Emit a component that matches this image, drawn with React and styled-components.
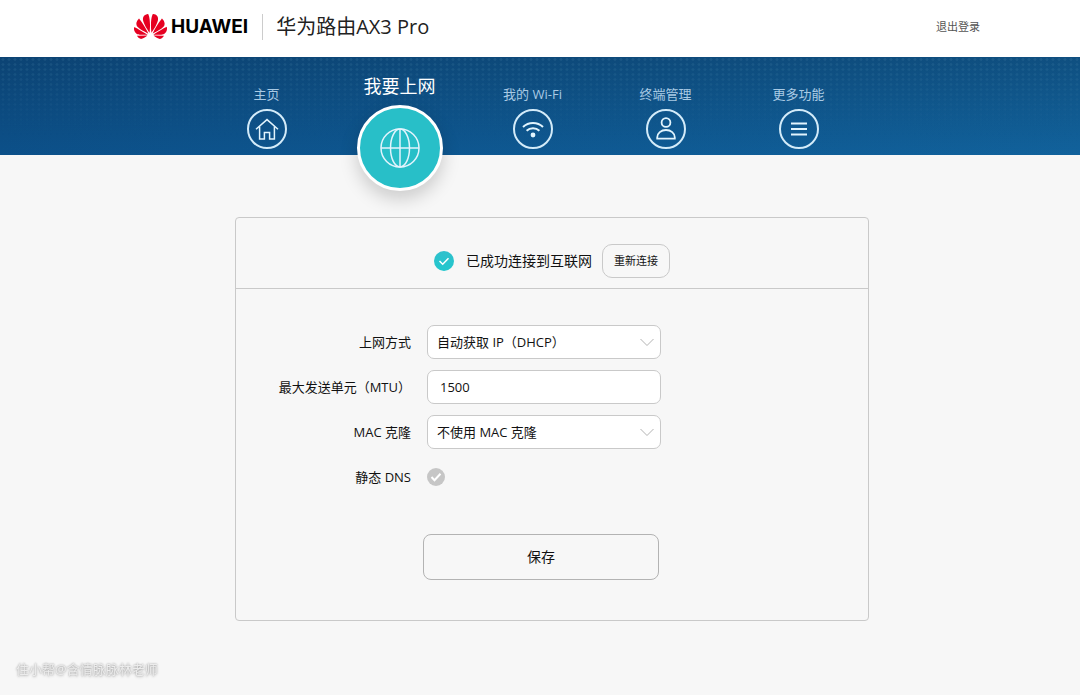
import React, { useState } from 'react';
import styled, { createGlobalStyle, css } from 'styled-components';
import { SiHuawei } from 'react-icons/si';

const GlobalStyle = createGlobalStyle`
  * {
    box-sizing: border-box;
  }

  body {
    margin: 0;
    background: #f7f7f7;
    color: #111;
    font-family: "Open Sans", "Noto Sans CJK SC", sans-serif;
    font-size: 13px;
    line-height: 20px;
  }

  button,
  input,
  select {
    font: inherit;
    color: inherit;
  }
`;

const Header = styled.header`
  display: flex;
  align-items: center;
  padding: 8px 100px 12px 134px;
  background: #fff;
`;

const Brand = styled.div`
  display: flex;
  align-items: center;
  gap: 4px;
  height: 26px;
  padding: 0 14px 0 0;
  border-right: 1px solid #ccc;
  line-height: 26px;
  font-family: Inter, sans-serif;
  font-size: 19px;
  font-weight: 700;
  color: #000;

  svg {
    color: #e60021;
  }
`;

const Product = styled.h1`
  flex: 1;
  margin: 0 0 0 13px;
  font-size: 20px;
  font-weight: 400;
  line-height: 37px;
  color: #222;
`;

const Logout = styled.a`
  font-size: 11px;
  color: #555;
  text-decoration: none;
`;

const Banner = styled.div`
  position: relative;
  background:
    linear-gradient(to bottom, rgba(12, 44, 76, 0.35), rgba(12, 44, 76, 0)),
    linear-gradient(to right, #0c5089, #11629c);

  &::before {
    content: '';
    position: absolute;
    inset: 0;
    background: radial-gradient(rgba(90, 150, 180, 0.18) 1px, transparent 2px) 0 0 / 6px 5px;
    mask-image: linear-gradient(to bottom, #000, transparent 80%);
  }
`;

const Nav = styled.nav`
  position: relative;
  display: grid;
  grid-template-columns: repeat(5, 133px);
  max-width: 680px;
  margin: 0 auto;
`;

const NavCircle = styled.span`
  display: flex;
  align-items: center;
  justify-content: center;
  width: 40px;
  height: 40px;
  border: 2px solid #d3ebf9;
  border-radius: 50%;
`;

const NavItem = styled.a`
  display: flex;
  flex-direction: column;
  align-items: center;
  gap: 5px;
  padding: 27px 0 6px;
  color: #a9cae4;
  text-decoration: none;

  svg {
    color: #e2f4fd;
  }

  ${props => props.$active && css`
    gap: 7px;
    padding: 17px 0 0;
    margin-bottom: -36px;
    font-size: 18px;
    line-height: 24px;
    color: #fff;

    ${NavCircle} {
      width: 86px;
      height: 86px;
      border: 3px solid #fff;
      background: #28bfc8;
      box-shadow: 0 8px 18px rgba(0, 0, 0, 0.18);
    }
  `}
`;

const Main = styled.main`
  padding: 62px 0 74px 24px;
`;

const Panel = styled.section`
  max-width: 634px;
  margin: 0 auto;
  border: 1px solid #c9c9c9;
  border-radius: 4px;
`;

const Status = styled.div`
  display: flex;
  align-items: center;
  justify-content: center;
  padding: 26px 0 10px;
  border-bottom: 1px solid #c9c9c9;
  font-size: 14px;
`;

const StatusText = styled.span`
  margin: 0 10px 0 12px;
`;

const Reconnect = styled.button`
  height: 34px;
  padding: 0 11px;
  border: 1px solid #c9c9c9;
  border-radius: 10px;
  background: transparent;
  font-size: 11px;
`;

const Form = styled.form`
  padding: 36px 0 40px;
`;

const Rows = styled.div`
  display: grid;
  gap: 11px;
`;

const Row = styled.div`
  display: grid;
  grid-template-columns: 175px 234px;
  align-items: center;
  gap: 16px;
  height: 34px;
`;

const Label = styled.label`
  text-align: right;
`;

const fieldStyle = css`
  width: 100%;
  height: 34px;
  border: 1px solid #c9c9c9;
  border-radius: 7px;
  background: #fff;
  outline: none;
`;

const TextInput = styled.input`
  ${fieldStyle}
  padding: 0 12px;
`;

const SelectBox = styled.div`
  position: relative;

  svg {
    position: absolute;
    top: 13px;
    right: 6px;
    color: #b3b3b3;
    pointer-events: none;
  }
`;

const Select = styled.select`
  ${fieldStyle}
  appearance: none;
  padding: 0 24px 0 9px;
`;

const CheckBox = styled.span`
  display: grid;
  place-items: center;
  width: 18px;
  height: 18px;

  > * {
    grid-area: 1 / 1;
  }

  input {
    appearance: none;
    width: 18px;
    height: 18px;
    margin: 0;
    border-radius: 50%;
    background: #c6c6c6;
  }

  input:checked {
    background: #28bfc8;
  }

  svg {
    pointer-events: none;
  }
`;

const Save = styled.button`
  display: block;
  width: 236px;
  height: 46px;
  margin: 40px 0 0 187px;
  border: 1px solid #b3b3b3;
  border-radius: 8px;
  background: transparent;
  font-size: 14px;
`;

const Watermark = styled.div`
  position: fixed;
  left: 16px;
  bottom: 16px;
  font-size: 13px;
  color: #ececec;
  text-shadow: 0 0 2px #999, 0 1px 3px #c4c4c4;
`;

const Icon = ({ size = 24, children, ...rest }) => (
  <svg
    width={size}
    height={size}
    viewBox={`0 0 ${size} ${size}`}
    fill="none"
    stroke="currentColor"
    strokeWidth="1.5"
    aria-hidden="true"
    {...rest}
  >
    {children}
  </svg>
);

const HomeIcon = () => (
  <Icon>
    <path d="M1 12.3 12 2.6l11 9.7" />
    <path d="M4.6 9.6V22h4.8v-6.4h5.2V22h4.8V9.6" />
  </Icon>
);

const GlobeIcon = () => (
  <Icon size={40}>
    <circle cx="20" cy="20" r="19" />
    <ellipse cx="20" cy="20" rx="9.5" ry="19" />
    <path d="M20 1v38M1 20h38" />
  </Icon>
);

const WifiIcon = () => (
  <Icon strokeWidth="2">
    <path d="M2 10a14.5 14.5 0 0 1 20 0" />
    <path d="M5.6 13.8a9.4 9.4 0 0 1 12.8 0" />
    <circle cx="12" cy="18" r="2.4" fill="currentColor" stroke="none" />
  </Icon>
);

const UserIcon = () => (
  <Icon strokeWidth="1.8">
    <circle cx="12" cy="5.5" r="4.4" />
    <path d="M3.2 21.6v-1.2a8.8 7.4 0 0 1 17.6 0v1.2z" />
  </Icon>
);

const MenuIcon = () => (
  <Icon strokeWidth="1.8">
    <path d="M4 6.5h16M4 12h16M4 17.5h16" />
  </Icon>
);

const ConnectedIcon = () => (
  <Icon size={20}>
    <defs>
      <linearGradient id="connected" x1="0" y1="0" x2="0" y2="1">
        <stop offset="0" stopColor="#2fc0cc" />
        <stop offset="1" stopColor="#22c7cd" />
      </linearGradient>
    </defs>
    <circle cx="10" cy="10" r="10" fill="url(#connected)" stroke="none" />
    <path d="m5.5 10 3.2 3.2 5.8-6" stroke="#fff" />
  </Icon>
);

const ChevronIcon = () => (
  <Icon size={16} height="9" viewBox="0 0 16 9" strokeWidth="1">
    <path d="m1.5 1 6.5 6.5L14.5 1" />
  </Icon>
);

const navItems = [
  { label: '主页', icon: HomeIcon },
  { label: '我要上网', icon: GlobeIcon, active: true },
  { label: '我的 Wi-Fi', icon: WifiIcon },
  { label: '终端管理', icon: UserIcon },
  { label: '更多功能', icon: MenuIcon },
];

const SelectField = ({ id, options }) => (
  <SelectBox>
    <Select id={id}>
      {options.map(option => <option key={option}>{option}</option>)}
    </Select>
    <ChevronIcon />
  </SelectBox>
);

const App = () => {
  const [mtu, setMtu] = useState('1500');
  const [staticDns, setStaticDns] = useState(false);

  return (
    <>
      <GlobalStyle />
      <Header>
        <Brand><SiHuawei size={33} aria-hidden="true" />HUAWEI</Brand>
        <Product>华为路由AX3 Pro</Product>
        <Logout href="#logout">退出登录</Logout>
      </Header>

      <Banner>
        <Nav>
          {navItems.map(({ label, icon: ItemIcon, active }) => (
            <NavItem key={label} href="#" $active={active}>
              {label}
              <NavCircle><ItemIcon /></NavCircle>
            </NavItem>
          ))}
        </Nav>
      </Banner>

      <Main>
        <Panel>
          <Status>
            <ConnectedIcon />
            <StatusText>已成功连接到互联网</StatusText>
            <Reconnect type="button">重新连接</Reconnect>
          </Status>
          <Form onSubmit={e => e.preventDefault()}>
            <Rows>
              <Row>
                <Label htmlFor="mode">上网方式</Label>
                <SelectField id="mode" options={['自动获取 IP（DHCP）']} />
              </Row>
              <Row>
                <Label htmlFor="mtu">最大发送单元（MTU）</Label>
                <TextInput id="mtu" value={mtu} onChange={e => setMtu(e.target.value)} />
              </Row>
              <Row>
                <Label htmlFor="mac">MAC 克隆</Label>
                <SelectField id="mac" options={['不使用 MAC 克隆']} />
              </Row>
              <Row>
                <Label htmlFor="dns">静态 DNS</Label>
                <CheckBox>
                  <input
                    id="dns"
                    type="checkbox"
                    checked={staticDns}
                    onChange={e => setStaticDns(e.target.checked)}
                  />
                  <Icon size={18}>
                    <path d="m4.5 9 3 3.2 6-6.4" stroke="#fff" strokeWidth="2" />
                  </Icon>
                </CheckBox>
              </Row>
            </Rows>
            <Save type="submit">保存</Save>
          </Form>
        </Panel>
      </Main>

      <Watermark>住小帮@含情脉脉林老师</Watermark>
    </>
  );
};

export default App;
